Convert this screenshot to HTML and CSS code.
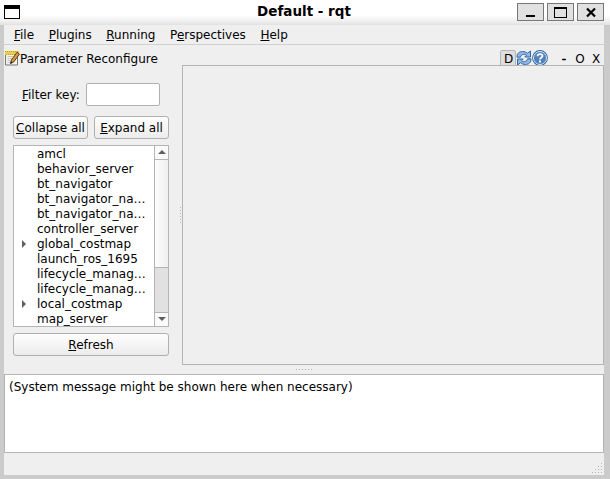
FILE: index.html
```html
<!DOCTYPE html>
<html lang="en">
<head>
<meta charset="utf-8">
<title>Default - rqt</title>
<link rel="stylesheet" href="styles.css">
</head>
<body>
<div class="window">
  <header class="titlebar">
    <span class="window-icon"></span>
    <h1 class="title">Default - rqt</h1>
    <div class="controls">
      <button class="control" aria-label="Minimize"><svg width="25" height="16" shape-rendering="crispEdges"><path d="M8 11h9v2H8z"/></svg></button>
      <button class="control" aria-label="Maximize"><svg width="25" height="16" shape-rendering="crispEdges"><path fill-rule="evenodd" d="M6 3h13v11H6zM7 5v8h11V5z"/></svg></button>
      <button class="control" aria-label="Close"><svg width="25" height="16"><path d="M9 4.500l8 8M17 4.500l-8 8" stroke="#000" stroke-width="2.200"/></svg></button>
    </div>
  </header>
  <div class="frame">
    <nav class="menubar">
      <span><u>F</u>ile</span><span><u>P</u>lugins</span><span><u>R</u>unning</span><span>P<u>e</u>rspectives</span><span><u>H</u>elp</span>
    </nav>
    <div class="dock-title">
      <svg class="note" width="15" height="16" viewBox="0 0 15 16">
        <path d="M.5 2.500h12v12.500H.5z" fill="#f2f2ef" stroke="#777"/>
        <path d="M2.500 6.500h6M2.500 8.500h5M2.500 10.500h4M2.500 12.500h3" stroke="#c4c4c4"/>
        <path d="M0 1h14v4H0z" fill="#ecd04a"/>
        <path d="M0 1.500h14M1 4.500h13" stroke="#c79c0e" stroke-dasharray="1 1"/>
        <path d="M5.500 13.500l1-3.500L12 2.200l2.500 1.800L8.700 12z" fill="#d39a45" stroke="#5f3b10"/>
        <path d="M5.300 13.700l.7-2.500 1.500 1.300z" fill="#222"/>
      </svg>
      <span class="dock-name">Parameter Reconfigure</span>
      <div class="dock-tools">
        <span class="tool-d">D</span>
        <svg width="16" height="16" viewBox="0 0 16 16">
          <path d="M1 7.200C.8 3.300 3.500 1.500 6.500 1.500c2 0 3.500.6 4.800 1.800L14.500 1v6H8.800l1.700-1.900C8 3.500 5 4.500 4.500 7.200z" fill="#8fb8e2" stroke="#3467a5"/>
          <path d="M15 8.800c.2 3.900-2.500 5.700-5.500 5.700-2 0-3.500-.6-4.800-1.800L1.500 15V9h5.700l-1.700 1.900c2.500 1.600 5.500.6 6-2.100z" fill="#8fb8e2" stroke="#3467a5"/>
        </svg>
        <svg width="16" height="16" viewBox="0 0 16 16">
          <circle cx="8" cy="8" r="7.900" fill="#3566a3"/>
          <circle cx="8" cy="8" r="6.500" fill="#4f81bb" stroke="#dce8f4"/>
          <path d="M5.600 6.300C5.600 3.300 10.500 3.400 10.500 5.900 10.500 7.500 8 7.600 8 9.500" fill="none" stroke="#fff" stroke-width="1.800"/>
          <path d="M7 10.500h2v2H7z" fill="#fff"/>
        </svg>
        <span class="glyph minus">-</span><span class="glyph">O</span><span class="glyph">X</span>
      </div>
    </div>
    <main class="workspace">
      <section class="sidebar">
        <label class="filter"><span><u>F</u>ilter key:</span><input type="text"></label>
        <div class="actions">
          <button class="btn"><u>C</u>ollapse all</button>
          <button class="btn"><u>E</u>xpand all</button>
        </div>
        <div class="tree">
          <ul class="nodes">
            <li>amcl</li>
            <li>behavior_server</li>
            <li>bt_navigator</li>
            <li>bt_navigator_na…</li>
            <li>bt_navigator_na…</li>
            <li>controller_server</li>
            <li class="branch">global_costmap</li>
            <li>launch_ros_1695</li>
            <li>lifecycle_manag…</li>
            <li>lifecycle_manag…</li>
            <li class="branch">local_costmap</li>
            <li>map_server</li>
          </ul>
          <div class="scrollbar">
            <span class="arrow up"></span>
            <span class="thumb"></span>
            <span class="groove"></span>
            <span class="arrow down"></span>
          </div>
        </div>
        <button class="btn refresh"><u>R</u>efresh</button>
      </section>
      <div class="vsplit"><i class="dots-v"></i></div>
      <section class="detail"></section>
    </main>
    <div class="hsplit"><i class="dots-h"></i></div>
    <section class="messages">(System message might be shown here when necessary)</section>
    <footer class="status">
      <svg width="12" height="12" shape-rendering="crispEdges" fill="#b4b4b4"><path d="M9 0h1v1H9zM6 3h1v1H6zM9 3h1v1H9zM3 6h1v1H3zM6 6h1v1H6zM9 6h1v1H9zM0 9h1v1H0zM3 9h1v1H3zM6 9h1v1H6zM9 9h1v1H9z"/></svg>
    </footer>
  </div>
</div>
</body>
</html>
```

FILE: styles.css
```css
* { box-sizing: border-box; }
body { margin: 0; font: 12px/15px "DejaVu Sans", sans-serif; color: #000; overflow: hidden; }
u { text-decoration: underline; text-decoration-thickness: 1px; text-underline-offset: 1px; text-decoration-skip-ink: none; }
button { font: inherit; color: inherit; padding: 0; margin: 0; }
svg { display: block; flex: none; }

.window { width: 610px; height: 479px; background: #cbcbcb; display: flex; flex-direction: column; }
.titlebar { height: 25px; flex: none; display: grid; grid-template-columns: 87px 1fr 87px; align-items: start; padding: 3px 6px 0 4px; background: linear-gradient(#fff 0, #fff 60%, #f3f3f3 80%, #e2e2e2 100%); }
.window-icon { width: 16px; height: 14px; margin-top: 2px; border: 1px solid #000; border-top-width: 4px; background: #fff; }
.title { margin: 0; font-size: 13.5px; line-height: 17px; font-weight: bold; text-align: center; white-space: nowrap; }
.controls { display: flex; gap: 3px; }
.control { width: 27px; height: 18px; border: 1px solid #777; background: #e1e1e1; }

.frame { flex: none; height: 450px; width: 600px; margin-left: 4px; background: #efefef; display: flex; flex-direction: column; }
.menubar { height: 20px; flex: none; border-bottom: 1px solid #d1d1d1; display: flex; gap: 14.6px; padding: 3px 10px 0; }

.dock-title { height: 20px; flex: none; display: flex; align-items: flex-start; padding: 5px 0 0 1px; }
.dock-name { margin-top: 2px; }
.dock-tools { margin-left: auto; display: flex; align-items: flex-start; height: 15px; overflow: hidden; }
.tool-d { width: 16px; height: 17px; padding: 1px 0 0 3px; border: 1px solid #b5b5b5; border-radius: 2px; background: #dedede; }
.glyph { width: 16px; text-align: center; margin-top: 2px; }
.minus { margin-left: 8px; -webkit-text-stroke: .4px #000; }

.workspace { height: 300px; flex: none; display: flex; }
.sidebar { width: 174px; padding: 18px 9px 9px; display: flex; flex-direction: column; }
.filter { display: flex; align-items: center; justify-content: space-between; height: 23px; flex: none; padding: 0 9px; }
.filter span { padding-top: 2px; }
.filter input { width: 74px; height: 23px; border: 1px solid #b1b1b1; border-radius: 2px; background: #fff; }
.actions { display: flex; gap: 6px; margin: 10px 0 6px; width: 156px; }
.btn { width: 75px; height: 23px; padding-top: 2px; border: 1px solid #b0b0b0; border-radius: 3px; background: linear-gradient(#fefefe, #ececec); white-space: nowrap; flex: none; }
.tree { width: 156px; height: 182px; flex: none; border: 1px solid #b4b4b4; background: #fff; display: flex; }
.nodes { list-style: none; margin: 0; padding: 1px 0 0 23px; width: 140px; height: 180px; white-space: nowrap; overflow: hidden; }
.nodes li { height: 15px; letter-spacing: -.01px; }
.branch { display: flex; align-items: center; }
.branch::before { content: ""; margin: -2px 11px 0 -15px; border-left: 4px solid #606060; border-top: 4px solid transparent; border-bottom: 4px solid transparent; }
.scrollbar { width: 14px; border-left: 1px solid #b4b4b4; display: flex; flex-direction: column; }
.arrow { height: 14px; display: flex; align-items: center; justify-content: center; background: #fafafa; }
.arrow::before { content: ""; border: 4px solid transparent; }
.up { border-bottom: 1px solid #b4b4b4; }
.up::before { border-top: 0; border-bottom-color: #606060; margin-top: -2px; }
.down { border-top: 1px solid #b4b4b4; }
.down::before { border-bottom: 0; border-top-color: #606060; margin-top: -2px; }
.thumb { height: 108px; border-bottom: 1px solid #b4b4b4; background: linear-gradient(90deg, #fefefe, #eee); }
.groove { flex: 1; background: #e1e1e1; }
.refresh { width: 156px; margin-top: 6px; }
.vsplit { width: 4px; display: flex; align-items: center; justify-content: center; }
.dots-v { width: 1px; height: 16px; background: repeating-linear-gradient(#b4b4b4 0 1px, transparent 1px 3px); }
.detail { flex: 1; border: 1px solid #b4b4b4; }
.hsplit { height: 9px; flex: none; display: flex; align-items: center; justify-content: center; }
.dots-h { width: 16px; height: 1px; background: repeating-linear-gradient(90deg, #b4b4b4 0 1px, transparent 1px 3px); }
.messages { height: 79px; flex: none; border: 1px solid #b4b4b4; background: #fff; padding: 5px 4px; }
.status { flex: 1; display: flex; justify-content: flex-end; align-items: flex-end; }
```
